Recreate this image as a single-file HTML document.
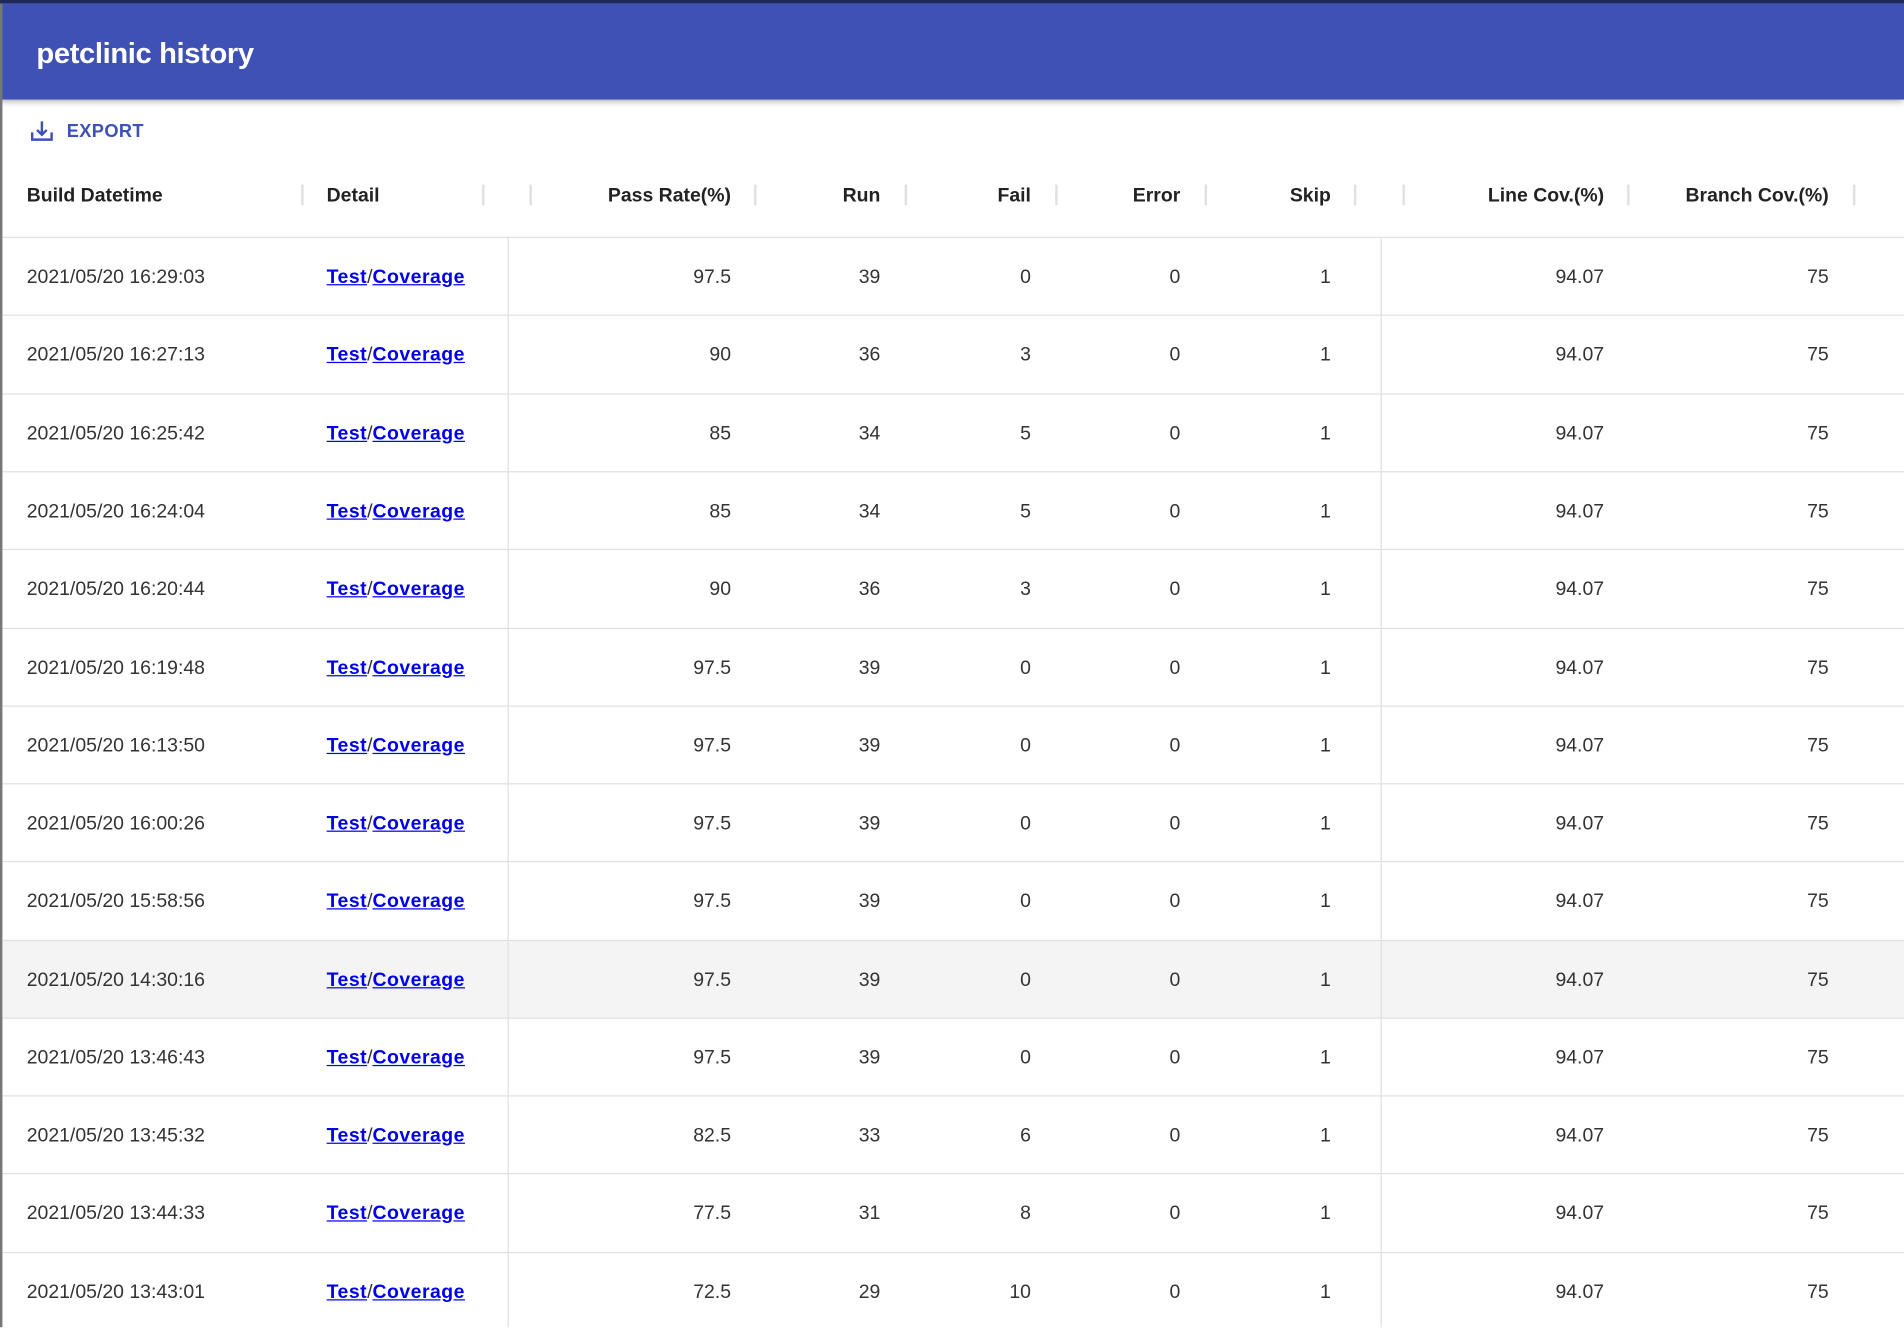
<!DOCTYPE html>
<html><head><meta charset="utf-8"><style>
html,body{margin:0;padding:0;width:1904px;height:1327px;overflow:hidden;background:#fff}
#w{position:absolute;left:0;top:0;width:1568px;height:1093px;transform:scale(1.21429);transform-origin:0 0;font-family:"Liberation Sans",sans-serif;color:#333}
.top{position:absolute;left:0;top:0;width:1568px;height:3px;background:#1e2a5e}
.hdr{position:absolute;left:0;top:3px;width:1568px;height:79px;background:#3f51b5;box-shadow:0 2px 5px rgba(0,0,0,.3)}
.hdr span{position:absolute;left:30px;top:28px;font-size:24px;font-weight:bold;color:#fff;letter-spacing:-0.3px}
.lb{position:absolute;left:0;top:3px;width:1.5px;height:1090px;background:#777}
.exp{position:absolute;left:55px;top:100px;font-size:15px;color:#3f51b5;font-weight:bold;letter-spacing:.3px}
.th{position:absolute;top:153px;font-size:16px;font-weight:bold;color:#222}
.sep{position:absolute;top:152px;width:2px;height:17px;background:#e0e0e0}
.hl{position:absolute;left:2px;width:1566px;height:1px;background:#e0e0e0}
.vl{position:absolute;top:195px;width:1px;height:898px;background:#e0e0e0}
.row{position:absolute;left:2px;width:1566px;height:64px;font-size:16px}
.row span{position:absolute;top:24px}
a{color:#0000ee;font-weight:bold;text-decoration:underline;letter-spacing:0.4px}
</style></head><body><div id="w">
<div class="top"></div>
<div class="hdr"><span>petclinic history</span></div>
<div class="lb"></div>
<svg style="position:absolute;left:25px;top:99px" width="19" height="18" viewBox="0 0 19 18"><path d="M1.5 10v6h16v-6M9.5 1v11M5.5 8l4 4 4-4" fill="none" stroke="#3f51b5" stroke-width="2"/></svg>
<div class="exp">EXPORT</div>
<div class="th" style="left:22px">Build Datetime</div>
<div class="th" style="left:269px">Detail</div>
<div class="th" style="right:966px">Pass Rate(%)</div>
<div class="th" style="right:843px">Run</div>
<div class="th" style="right:719px">Fail</div>
<div class="th" style="right:596px">Error</div>
<div class="th" style="right:472px">Skip</div>
<div class="th" style="right:247px">Line Cov.(%)</div>
<div class="th" style="right:62px">Branch Cov.(%)</div>
<div class="sep" style="left:248px"></div><div class="sep" style="left:397px"></div><div class="sep" style="left:436px"></div><div class="sep" style="left:621px"></div><div class="sep" style="left:745px"></div><div class="sep" style="left:869px"></div><div class="sep" style="left:992px"></div><div class="sep" style="left:1115px"></div><div class="sep" style="left:1155px"></div><div class="sep" style="left:1340px"></div><div class="sep" style="left:1526px"></div>
<div class="row" style="top:774px;height:64px;background:#f4f4f4"></div>
<div class="hl" style="top:195px"></div><div class="hl" style="top:259px"></div><div class="hl" style="top:324px"></div><div class="hl" style="top:388px"></div><div class="hl" style="top:452px"></div><div class="hl" style="top:517px"></div><div class="hl" style="top:581px"></div><div class="hl" style="top:645px"></div><div class="hl" style="top:709px"></div><div class="hl" style="top:774px"></div><div class="hl" style="top:838px"></div><div class="hl" style="top:902px"></div><div class="hl" style="top:966px"></div><div class="hl" style="top:1031px"></div>
<div class="vl" style="left:418px"></div><div class="vl" style="left:1137px"></div>
<div class="row" style="top:196px"><span style="left:20px">2021/05/20 16:29:03</span><span style="left:267px"><a>Test</a>/<a>Coverage</a></span><span style="right:966px">97.5</span><span style="right:843px">39</span><span style="right:719px">0</span><span style="right:596px">0</span><span style="right:472px">1</span><span style="right:247px">94.07</span><span style="right:62px">75</span></div>
<div class="row" style="top:260px"><span style="left:20px">2021/05/20 16:27:13</span><span style="left:267px"><a>Test</a>/<a>Coverage</a></span><span style="right:966px">90</span><span style="right:843px">36</span><span style="right:719px">3</span><span style="right:596px">0</span><span style="right:472px">1</span><span style="right:247px">94.07</span><span style="right:62px">75</span></div>
<div class="row" style="top:325px"><span style="left:20px">2021/05/20 16:25:42</span><span style="left:267px"><a>Test</a>/<a>Coverage</a></span><span style="right:966px">85</span><span style="right:843px">34</span><span style="right:719px">5</span><span style="right:596px">0</span><span style="right:472px">1</span><span style="right:247px">94.07</span><span style="right:62px">75</span></div>
<div class="row" style="top:389px"><span style="left:20px">2021/05/20 16:24:04</span><span style="left:267px"><a>Test</a>/<a>Coverage</a></span><span style="right:966px">85</span><span style="right:843px">34</span><span style="right:719px">5</span><span style="right:596px">0</span><span style="right:472px">1</span><span style="right:247px">94.07</span><span style="right:62px">75</span></div>
<div class="row" style="top:453px"><span style="left:20px">2021/05/20 16:20:44</span><span style="left:267px"><a>Test</a>/<a>Coverage</a></span><span style="right:966px">90</span><span style="right:843px">36</span><span style="right:719px">3</span><span style="right:596px">0</span><span style="right:472px">1</span><span style="right:247px">94.07</span><span style="right:62px">75</span></div>
<div class="row" style="top:518px"><span style="left:20px">2021/05/20 16:19:48</span><span style="left:267px"><a>Test</a>/<a>Coverage</a></span><span style="right:966px">97.5</span><span style="right:843px">39</span><span style="right:719px">0</span><span style="right:596px">0</span><span style="right:472px">1</span><span style="right:247px">94.07</span><span style="right:62px">75</span></div>
<div class="row" style="top:582px"><span style="left:20px">2021/05/20 16:13:50</span><span style="left:267px"><a>Test</a>/<a>Coverage</a></span><span style="right:966px">97.5</span><span style="right:843px">39</span><span style="right:719px">0</span><span style="right:596px">0</span><span style="right:472px">1</span><span style="right:247px">94.07</span><span style="right:62px">75</span></div>
<div class="row" style="top:646px"><span style="left:20px">2021/05/20 16:00:26</span><span style="left:267px"><a>Test</a>/<a>Coverage</a></span><span style="right:966px">97.5</span><span style="right:843px">39</span><span style="right:719px">0</span><span style="right:596px">0</span><span style="right:472px">1</span><span style="right:247px">94.07</span><span style="right:62px">75</span></div>
<div class="row" style="top:710px"><span style="left:20px">2021/05/20 15:58:56</span><span style="left:267px"><a>Test</a>/<a>Coverage</a></span><span style="right:966px">97.5</span><span style="right:843px">39</span><span style="right:719px">0</span><span style="right:596px">0</span><span style="right:472px">1</span><span style="right:247px">94.07</span><span style="right:62px">75</span></div>
<div class="row" style="top:775px"><span style="left:20px">2021/05/20 14:30:16</span><span style="left:267px"><a>Test</a>/<a>Coverage</a></span><span style="right:966px">97.5</span><span style="right:843px">39</span><span style="right:719px">0</span><span style="right:596px">0</span><span style="right:472px">1</span><span style="right:247px">94.07</span><span style="right:62px">75</span></div>
<div class="row" style="top:839px"><span style="left:20px">2021/05/20 13:46:43</span><span style="left:267px"><a>Test</a>/<a>Coverage</a></span><span style="right:966px">97.5</span><span style="right:843px">39</span><span style="right:719px">0</span><span style="right:596px">0</span><span style="right:472px">1</span><span style="right:247px">94.07</span><span style="right:62px">75</span></div>
<div class="row" style="top:903px"><span style="left:20px">2021/05/20 13:45:32</span><span style="left:267px"><a>Test</a>/<a>Coverage</a></span><span style="right:966px">82.5</span><span style="right:843px">33</span><span style="right:719px">6</span><span style="right:596px">0</span><span style="right:472px">1</span><span style="right:247px">94.07</span><span style="right:62px">75</span></div>
<div class="row" style="top:967px"><span style="left:20px">2021/05/20 13:44:33</span><span style="left:267px"><a>Test</a>/<a>Coverage</a></span><span style="right:966px">77.5</span><span style="right:843px">31</span><span style="right:719px">8</span><span style="right:596px">0</span><span style="right:472px">1</span><span style="right:247px">94.07</span><span style="right:62px">75</span></div>
<div class="row" style="top:1032px"><span style="left:20px">2021/05/20 13:43:01</span><span style="left:267px"><a>Test</a>/<a>Coverage</a></span><span style="right:966px">72.5</span><span style="right:843px">29</span><span style="right:719px">10</span><span style="right:596px">0</span><span style="right:472px">1</span><span style="right:247px">94.07</span><span style="right:62px">75</span></div>
</div></body></html>
